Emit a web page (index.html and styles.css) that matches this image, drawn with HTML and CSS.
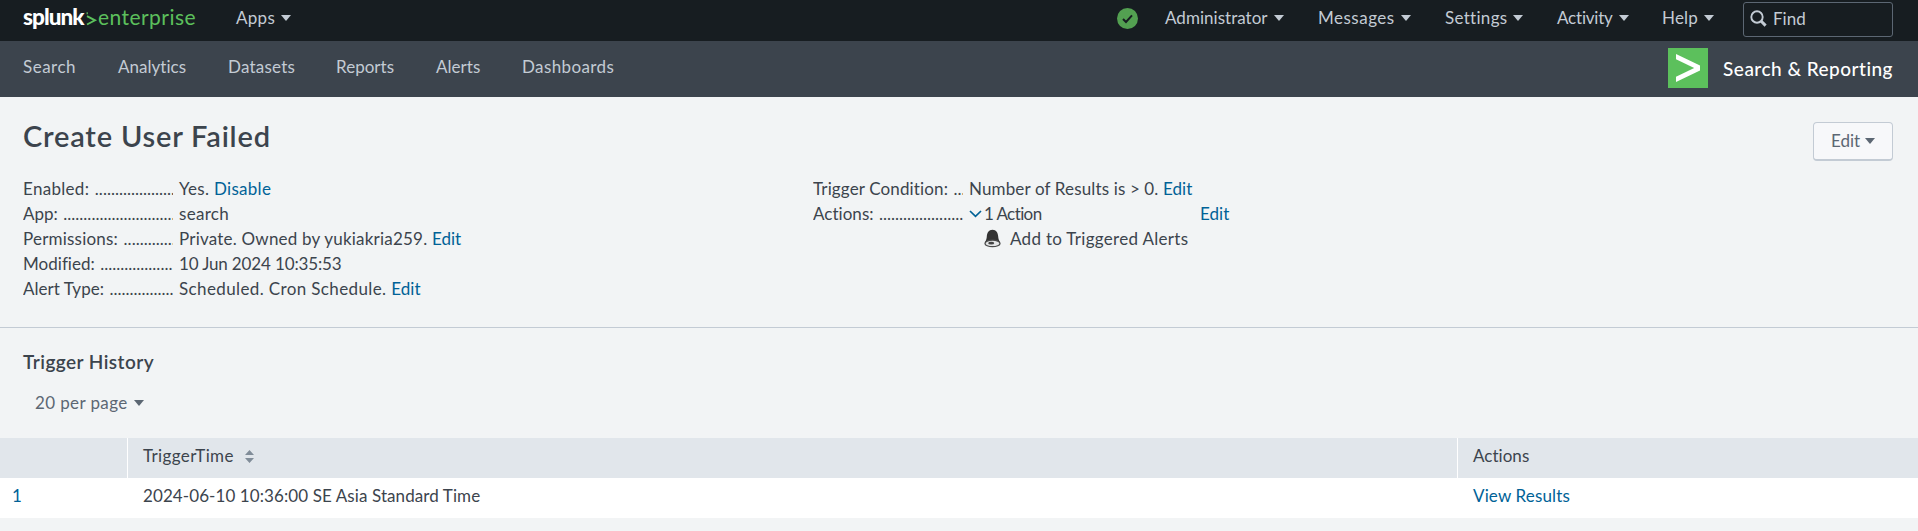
FILE: index.html
```html
<!DOCTYPE html>
<html lang="en">
<head>
<meta charset="utf-8">
<title>Create User Failed | Splunk</title>
<link rel="stylesheet" href="styles.css">
</head>
<body>
<header class="topbar">
  <a class="logo" aria-label="splunk enterprise"><span class="logo-splunk">splunk</span><svg class="logo-arrow" width="12" height="17" viewBox="0 0 12 17"><path d="M1 5.200 L9 9.300 L1 13.500" fill="none" stroke="#5cc05c" stroke-width="1.900"/><path d="M1.200 1.200v2" stroke="#5cc05c" stroke-width="1.200"/></svg><span class="logo-ent">enterprise</span></a>
  <a class="menu menu-apps ls-3">Apps<i class="caret"></i></a>
  <div class="top-right">
    <svg class="health" width="21" height="21" viewBox="0 0 21 21"><circle cx="10.5" cy="10.5" r="10.5" fill="#53a051"/><path d="M6 11l3 3 6-6.6" fill="none" stroke="#171d21" stroke-width="2"/></svg>
    <a class="menu m-admin ls-0">Administrator<i class="caret"></i></a>
    <a class="menu m-msg ls-5">Messages<i class="caret"></i></a>
    <a class="menu m-set ls-3">Settings<i class="caret"></i></a>
    <a class="menu m-act ls-n2">Activity<i class="caret"></i></a>
    <a class="menu m-help ls-2">Help<i class="caret"></i></a>
    <div class="find"><svg width="17" height="17" viewBox="0 0 17 17"><circle cx="7" cy="7" r="5.7" fill="none" stroke="#c3cbd4" stroke-width="1.9"/><path d="M11 11l4.6 4.6" stroke="#c3cbd4" stroke-width="3"/></svg><span>Find</span></div>
  </div>
</header>
<nav class="appbar">
  <div class="tabs">
    <a class="ls-5 w-search">Search</a><a class="ls-0 w-analytics">Analytics</a><a class="ls-2 w-datasets">Datasets</a><a class="ls-0 w-reports">Reports</a><a class="ls-0 w-alerts">Alerts</a><a class="ls-4">Dashboards</a>
  </div>
  <div class="app">
    <svg width="40" height="40" viewBox="0 0 40 40"><rect width="40" height="40" fill="#5cc05c"/><path d="M8 6 L32 17.5 V22.5 L8 34 V28.7 L26.2 20 L8 11.3Z" fill="#fff"/></svg>
    <span>Search &amp; Reporting</span>
  </div>
</nav>
<main>
  <section class="summary">
    <div class="title-row">
      <h1>Create User Failed</h1>
      <button class="edit">Edit<i class="caret"></i></button>
    </div>
    <div class="details">
      <dl class="col">
        <dt class="ls-3"><span>Enabled: </span></dt><dd class="ls-3">Yes. <a>Disable</a></dd>
        <dt class="ls-0"><span>App: </span></dt><dd class="ls-3">search</dd>
        <dt class="ls-2"><span>Permissions: </span></dt><dd class="ls-2">Private. Owned by yukiakria259. <a class="ls-0">Edit</a></dd>
        <dt class="ls-0"><span>Modified: </span></dt><dd class="ls-n1">10 Jun 2024 10:35:53</dd>
        <dt class="ls-0"><span>Alert Type: </span></dt><dd class="ls-4">Scheduled. Cron Schedule. <a class="ls-0">Edit</a></dd>
      </dl>
      <dl class="col">
        <dt class="ls-1"><span>Trigger Condition: </span></dt><dd class="ls-1">Number of Results is &gt; 0. <a class="ls-0">Edit</a></dd>
        <dt class="ls-0"><span>Actions: </span></dt>
        <dd class="actions">
          <div class="action-head">
            <svg width="13" height="8" viewBox="0 0 13 8"><path d="M1 1l5.5 5.4L12 1" fill="none" stroke="#006297" stroke-width="1.7"/></svg>
            <span class="ls-n6 count">1 Action</span><a class="ls-0">Edit</a>
          </div>
          <div class="action-item">
            <svg width="17" height="19" viewBox="0 0 17 19"><path d="M8.500 .8C12.300 .8 14 4 14.200 7.500c.1 2.300.7 4 2 5.700H.8C2.100 11.500 2.700 9.800 2.800 7.500 3 4 4.700 .8 8.500 .8Z" fill="#333"/><ellipse cx="8.500" cy="14.400" rx="7.500" ry="3.300" fill="#e4e5e6" stroke="#4a4a4a" stroke-width="1.300"/><ellipse cx="7.200" cy="14.200" rx="3" ry="1.400" fill="#444"/></svg>
            <span class="ls-3">Add to Triggered Alerts</span>
          </div>
        </dd>
      </dl>
    </div>
  </section>
  <section class="history">
    <h2>Trigger History</h2>
    <a class="per-page ls-4">20 per page<i class="caret"></i></a>
    <table>
      <colgroup><col class="c-num"><col class="c-time"><col></colgroup>
      <thead><tr><th></th><th class="ls-4">TriggerTime<svg class="sort" width="9" height="13" viewBox="0 0 9 13"><path d="M4.500 0L9 5H0ZM0 8H9L4.500 13Z" fill="#818d99"/></svg></th><th class="ls-0">Actions</th></tr></thead>
      <tbody><tr><td><a>1</a></td><td class="ls-05">2024-06-10 10:36:00 SE Asia Standard Time</td><td class="ls-1"><a>View Results</a></td></tr></tbody>
    </table>
  </section>
</main>
</body>
</html>
```
FILE: styles.css
```css
* { box-sizing: border-box; }
body { margin: 0; background: #f2f4f5; color: #3c444d; font: 17px/25px Lato, "Open Sans", sans-serif; overflow: hidden; }
a { color: #006297; text-decoration: none; }
svg { flex: none; display: block; }

/* tracking steps */
.ls-n6 { letter-spacing: -.6px; }
.ls-n2 { letter-spacing: -.2px; }
.ls-n1 { letter-spacing: -.14px; }
.ls-0 { letter-spacing: .03px; }
.ls-05 { letter-spacing: .09px; }
.ls-1 { letter-spacing: .14px; }
.ls-2 { letter-spacing: .21px; }
.ls-3 { letter-spacing: .3px; }
.ls-4 { letter-spacing: .38px; }
.ls-5 { letter-spacing: .5px; }

.caret { display: inline-block; width: 0; height: 0; border: 5px solid transparent; border-top: 6px solid currentColor; border-bottom: 0; margin-left: 6px; vertical-align: 3px; }

.topbar { display: flex; height: 41px; background: #171d21; color: #c3cbd4; line-height: 36px; }
.topbar a { color: inherit; }
.logo { display: flex; width: 236px; padding-left: 23px; }
.logo-splunk { width: 62px; font-weight: 900; font-size: 22.5px; line-height: 34px; letter-spacing: -.95px; color: #fff; }
.topbar .logo-ent { color: #5cc05c; font-size: 21px; line-height: 34px; letter-spacing: .45px; }
.logo-arrow { margin: 11px 0 0 1px; }
.menu-apps { flex: 1; }
.top-right { display: flex; padding-right: 25px; }
.health { margin: 8px 27px 0 0; }
.m-admin { width: 153px; }
.m-msg { width: 127px; }
.m-set { width: 112px; }
.m-act { width: 105px; }
.m-help { width: 81px; }
.find { display: flex; width: 150px; height: 35px; margin-top: 2px; padding: 7px 0 0 6px; gap: 6px; border: 1px solid #5c6773; border-radius: 3px; line-height: 17px; }

.appbar { display: flex; justify-content: space-between; height: 56px; padding: 0 25px 0 23px; background: #3c444d; }
.tabs { display: flex; line-height: 52px; }
.tabs a { color: #c3cbd4; }
.w-search { width: 95px; }
.w-analytics { width: 110px; }
.w-datasets { width: 108px; }
.w-reports { width: 100px; }
.w-alerts { width: 86px; }
.app { display: flex; align-items: center; gap: 15px; height: 54px; color: #fff; font-size: 19px; font-weight: 500; letter-spacing: .48px; }

.summary { height: 231px; padding: 21px 25px 0 23px; border-bottom: 1px solid #c3cbd4; }
.title-row { display: flex; justify-content: space-between; height: 58px; }
h1 { margin: 0; font-size: 29px; font-weight: 600; line-height: 36px; letter-spacing: .8px; }
.edit { width: 80px; height: 39px; margin-top: 4px; padding: 0 0 2px; border: 1px solid #c3cbd4; border-bottom-width: 2px; border-radius: 4px; background: #f7f8fa; color: #5c6773; font: inherit; }
.edit .caret { margin-left: 5px; }
.details { display: grid; grid-template-columns: 790px 1fr; }
.col { display: grid; grid-template-columns: 150px 1fr; column-gap: 6px; align-content: start; margin: 0; }
dt { display: flex; overflow: hidden; white-space: pre; }
dt::after { content: "..............................................."; flex: 1; overflow: hidden; letter-spacing: 0; margin-left: 1px; }
dd { margin: 0; white-space: pre; }
.actions { white-space: normal; }
.action-head { display: flex; align-items: center; gap: 2px; }
.count { width: 214px; }
.action-item { display: flex; gap: 9px; padding-left: 15px; }
.action-item svg { margin-top: 3px; }

h2 { margin: 0; padding: 22px 0 0 23px; font-size: 19px; font-weight: 600; line-height: 24px; letter-spacing: .45px; }
.per-page { display: block; padding: 16px 0 23px 35px; color: #5c6773; }
table { width: 100%; border-collapse: collapse; table-layout: fixed; }
.c-num { width: 127px; }
.c-time { width: 1330px; }
th, td { height: 40px; padding: 0 0 4px 16px; text-align: left; font-weight: 400; line-height: 36px; }
th { background: #e1e6eb; }
th + th { box-shadow: inset 1px 0 #fff; }
td { background: #fff; }
td:first-child { padding-left: 12px; }
.sort { display: inline-block; margin-left: 11px; vertical-align: -1px; }
```
